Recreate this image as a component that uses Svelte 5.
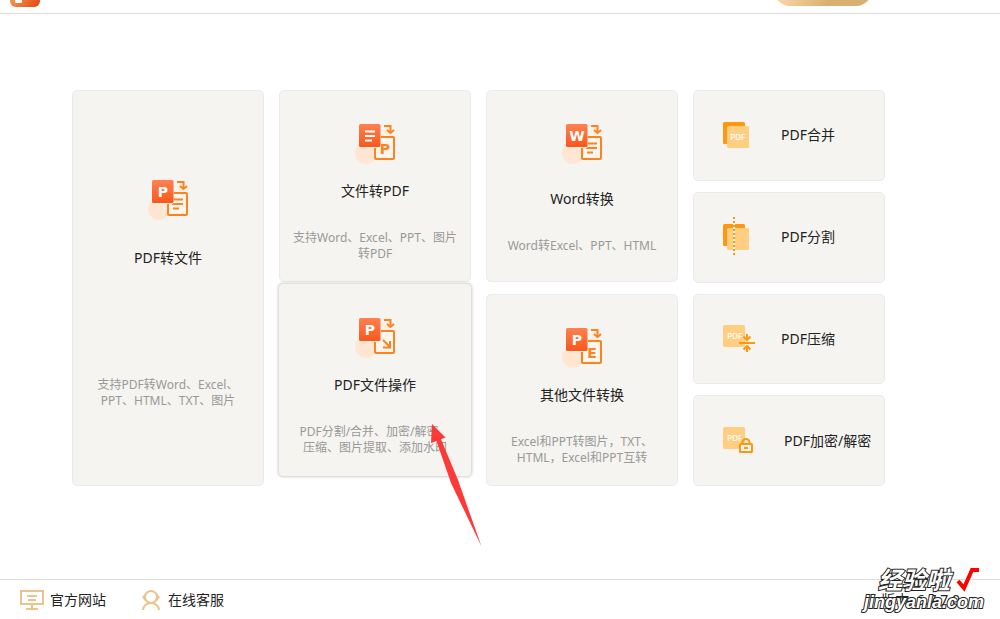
<script lang="ts">
	interface Tool {
		title: string;
		desc: string;
		badge: string;
		target: string;
		kind?: string;
	}

	const pdfToFile: Tool = {
		title: 'PDF转文件',
		desc: '支持PDF转Word、Excel、\nPPT、HTML、TXT、图片',
		badge: 'P',
		target: 'lines',
		kind: 'tall'
	};
	const fileToPdf: Tool = {
		title: '文件转PDF',
		desc: '支持Word、Excel、PPT、图片\n转PDF',
		badge: 'lines',
		target: 'P'
	};
	const pdfOps: Tool = {
		title: 'PDF文件操作',
		desc: 'PDF分割/合并、加密/解密、\n压缩、图片提取、添加水印',
		badge: 'P',
		target: 'arrow',
		kind: 'raised'
	};
	const wordConvert: Tool = {
		title: 'Word转换',
		desc: 'Word转Excel、PPT、HTML',
		badge: 'W',
		target: 'lines',
		kind: 'single'
	};
	const otherConvert: Tool = {
		title: '其他文件转换',
		desc: 'Excel和PPT转图片，TXT、\nHTML，Excel和PPT互转',
		badge: 'P',
		target: 'E'
	};

	const columns = [[pdfToFile], [fileToPdf, pdfOps], [wordConvert, otherConvert]];

	const quick = [
		{ id: 'merge', label: 'PDF合并' },
		{ id: 'split', label: 'PDF分割' },
		{ id: 'compress', label: 'PDF压缩' },
		{ id: 'lock', label: 'PDF加密/解密' }
	];
</script>

{#snippet toolIcon(badge: string, target: string)}
	<svg class="tool-icon" viewBox="0 0 40 40" aria-hidden="true">
		<defs>
			<linearGradient id="badge" x1="0" y1="0" x2="0" y2="1">
				<stop offset="0" stop-color="#ff8150" />
				<stop offset="1" stop-color="#f9571b" />
			</linearGradient>
		</defs>
		<circle cx="11" cy="29" r="11" fill="#ffe6d2" />
		<circle cx="33" cy="7" r="4" fill="#ffeede" />
		<rect x="20" y="13" width="19" height="22" rx="1" fill="#fbf5ee" stroke="#fa8420" stroke-width="2" />
		{#if target === 'lines'}
			<path d="M24 19.500h11M24 24h11M25 28.500h6" stroke="#fa8420" stroke-width="2" />
		{:else if target === 'arrow'}
			<path d="M28 22l7 7M35 23v6.500h-7" fill="none" stroke="#fa8420" stroke-width="2" />
		{:else}
			<text class="glyph target" x="30" y="30" text-anchor="middle">{target}</text>
		{/if}
		<path d="M29 2h6.500v6" fill="none" stroke="#fa8420" stroke-width="2" />
		<path d="M32 6l3.500 3 3.500-3" fill="none" stroke="#fa8420" stroke-width="2" />
		<rect x="4" y="0" width="22" height="24" rx="2" fill="#fff1e5" />
		<rect x="4" y="0" width="21.500" height="23" rx="1.500" fill="url(#badge)" />
		{#if badge === 'lines'}
			<path d="M10 7.500h10M10 12h10M10 16.500h7" stroke="#fff" stroke-width="2" />
		{:else}
			<text class="glyph" x="15" y="17" text-anchor="middle">{badge}</text>
		{/if}
	</svg>
{/snippet}

{#snippet quickIcon(id: string)}
	<svg class="quick-icon" viewBox="0 0 34 40" aria-hidden="true">
		{#if id === 'merge' || id === 'split'}
			<rect x="0" y="7" width="22" height="22" rx="1.500" fill="#ff970f" />
			<rect x="4" y="11" width="22" height="22" rx="1.500" fill="#ffce81" />
		{:else}
			<rect x="0" y="6" width="22" height="22" rx="1.500" fill="#ffce81" />
		{/if}
		{#if id === 'merge'}
			<text x="15" y="25" text-anchor="middle">PDF</text>
		{:else if id === 'split'}
			<path d="M11 0v40" stroke="#ff970f" stroke-width="2" stroke-dasharray="2 2" />
			<path d="M11 6v26" stroke="#fff" stroke-width="2" stroke-dasharray="2 2" />
		{:else}
			<text x="12" y="20" text-anchor="middle">PDF</text>
		{/if}
		{#if id === 'compress'}
			<path
				d="M16 24h16M24 15v5M20.500 17.500l3.500 3.500 3.500-3.500M24 33v-5M20.500 30.500l3.500-3.500 3.500 3.500"
				fill="none"
				stroke="#ff970f"
				stroke-width="2"
			/>
		{:else if id === 'lock'}
			<path d="M19.500 24v-2.500a3.500 3.500 0 0 1 7 0v2.500" fill="none" stroke="#ff970f" stroke-width="2" />
			<rect x="17" y="23" width="12" height="8" rx="0.500" fill="#f7f5f1" stroke="#ff970f" stroke-width="2" />
			<path d="M21 27h4" stroke="#ff970f" stroke-width="2" />
		{/if}
	</svg>
{/snippet}

<div class="app">
	<header>
		<svg class="logo" viewBox="0 0 30 30" aria-hidden="true">
			<defs>
				<linearGradient id="logo" x1="0" y1="0" x2="1" y2="1">
					<stop offset="0.3" stop-color="#f7a55c" />
					<stop offset="1" stop-color="#e2420e" />
				</linearGradient>
			</defs>
			<rect width="30" height="30" rx="6" fill="url(#logo)" />
			<rect x="5" y="6" width="7" height="20" rx="1" fill="#fff" />
		</svg>
		<button type="button" class="vip" aria-label="VIP"></button>
	</header>

	<main>
		{#each columns as column}
			<div class="column">
				{#each column as tool (tool.title)}
					<button type="button" class="card {tool.kind ?? ''}">
						{@render toolIcon(tool.badge, tool.target)}
						<span class="title">{tool.title}</span>
						<span class="desc">{tool.desc}</span>
						{#if tool.kind === 'raised'}
							<svg class="pointer" viewBox="0 0 51 123" aria-hidden="true">
								<path d="M1 0L14.500 13.500L10 15.200L27 56L50.500 122.500L20 59L5.500 17L0 19Z" fill="#fc3b39" />
							</svg>
						{/if}
					</button>
				{/each}
			</div>
		{/each}
		<div class="column quick">
			{#each quick as item (item.id)}
				<button type="button" class="quick-card {item.id}">
					{@render quickIcon(item.id)}
					<span>{item.label}</span>
				</button>
			{/each}
		</div>
	</main>

	<footer>
		<a href="#site">
			<svg class="site-icon" viewBox="0 0 24 20" aria-hidden="true">
				<path d="M1 1h22v13H1zM12 14v5M6 19h12M7 6h10M8 10h8" fill="none" stroke="#eac48c" stroke-width="2" />
			</svg>
			官方网站
		</a>
		<a href="#service">
			<svg class="service-icon" viewBox="0 0 20 20" aria-hidden="true">
				<circle cx="9" cy="7" r="6" fill="none" stroke="#eac48c" stroke-width="2" />
				<path d="M3 4L0 7l3 4zM15 4l3 3-3 4z" fill="#eac48c" />
				<path d="M1 20c0-4 4-7 8-7s8 3 8 7" fill="none" stroke="#eac48c" stroke-width="2" />
			</svg>
			在线客服
		</a>
		<span class="version">版本: 6.7.7.0</span>
		<div class="mark">
			<div class="mark-name">
				经验啦
				<svg viewBox="0 0 24 24" aria-hidden="true">
					<path d="M2 13l6 7L16 2h7" fill="none" stroke="#f00" stroke-width="4" />
				</svg>
			</div>
			<div class="mark-url">jingyanla.com</div>
		</div>
	</footer>
</div>

<style>
	:global(body) {
		margin: 0;
		background: #fff;
	}
	.app {
		min-height: 100vh;
		display: flex;
		flex-direction: column;
		overflow: hidden;
		color: #222;
		font-family: 'Noto Sans', 'Noto Sans CJK SC', sans-serif;
		font-size: 14px;
		line-height: 20px;
	}
	header {
		height: 13px;
		border-bottom: 1px solid #dcdcdc;
		padding: 0 128px 0 10px;
		display: flex;
		justify-content: space-between;
		align-items: flex-end;
		overflow: hidden;
	}
	.logo {
		width: 30px;
		height: 30px;
		flex: none;
		margin-bottom: 6px;
	}
	.vip {
		width: 98px;
		height: 32px;
		margin-bottom: 7px;
		border-radius: 16px;
		background: linear-gradient(120deg, #f8d2a4 20%, #dab071 60%);
	}
	main {
		flex: 1;
		display: grid;
		grid-template-columns: repeat(4, 1fr);
		column-gap: 15px;
		align-content: start;
		padding: 76px 115px 48px 72px;
	}
	.column {
		display: flex;
		flex-direction: column;
		gap: 12px;
	}
	.column.quick {
		gap: 11px;
	}
	button {
		appearance: none;
		border: none;
		margin: 0;
		padding: 0;
		color: inherit;
		font: inherit;
		cursor: pointer;
	}
	.card {
		box-sizing: border-box;
		min-height: 192px;
		border: 1px solid #ebebeb;
		border-radius: 5px;
		background: #f5f4f0;
		padding: 33px 8px 16px;
		display: flex;
		flex-direction: column;
		align-items: center;
		justify-content: flex-start;
	}
	.card.tall {
		min-height: 396px;
		padding-top: 89px;
	}
	.card.raised {
		position: relative;
		min-height: 194px;
		margin: -11px -1px 0;
		padding-top: 34px;
		border-color: #e0e0e0;
		box-shadow: 0 0 3px rgba(0, 0, 0, 0.2);
	}
	.tool-icon {
		width: 40px;
		height: 40px;
		flex: none;
	}
	.glyph {
		font: bold 14px 'DejaVu Sans', sans-serif;
		fill: #fff;
	}
	.glyph.target {
		fill: #fa8420;
	}
	.title {
		margin-top: 17px;
	}
	.desc {
		margin-top: 29px;
		color: #999;
		font-size: 12px;
		line-height: 16px;
		white-space: pre;
	}
	.single .title {
		margin-top: 25px;
	}
	.tall .title {
		margin-top: 28px;
	}
	.tall .desc {
		margin-top: 109px;
	}
	.pointer {
		position: absolute;
		left: 152px;
		top: 140px;
		width: 51px;
		height: 123px;
		z-index: 1;
	}
	.quick-card {
		box-sizing: border-box;
		flex: 1;
		min-height: 90px;
		border: 1px solid #ebebeb;
		border-radius: 5px;
		background: #f5f4f0;
		padding: 0 8px 0 29px;
		display: flex;
		align-items: center;
		gap: 24px;
		white-space: nowrap;
	}
	.quick-card.lock {
		gap: 27px;
	}
	.quick-icon {
		width: 34px;
		height: 40px;
		flex: none;
	}
	.quick-icon text {
		font: 500 8px Inter, sans-serif;
		fill: #fff;
	}
	footer {
		position: relative;
		height: 39px;
		border-top: 1px solid #dcdcdc;
		padding: 0 40px 0 20px;
		display: flex;
		align-items: center;
		gap: 36px;
	}
	footer a {
		display: flex;
		align-items: center;
		gap: 6px;
		color: inherit;
		text-decoration: none;
	}
	.site-icon {
		width: 24px;
		height: 20px;
	}
	.service-icon {
		width: 20px;
		height: 20px;
	}
	.version {
		margin-left: auto;
	}
	.mark {
		position: absolute;
		right: 16px;
		bottom: 7px;
		color: #fff;
		font-style: italic;
		font-weight: bold;
		-webkit-text-stroke: 2px #222;
		paint-order: stroke fill;
	}
	.mark-name {
		display: flex;
		align-items: center;
		gap: 6px;
		padding-left: 14px;
		font-size: 24px;
		line-height: 22px;
	}
	.mark-name svg {
		width: 24px;
		height: 24px;
	}
	.mark-url {
		font-family: 'Liberation Sans', sans-serif;
		font-size: 18px;
		line-height: 20px;
	}
</style>
